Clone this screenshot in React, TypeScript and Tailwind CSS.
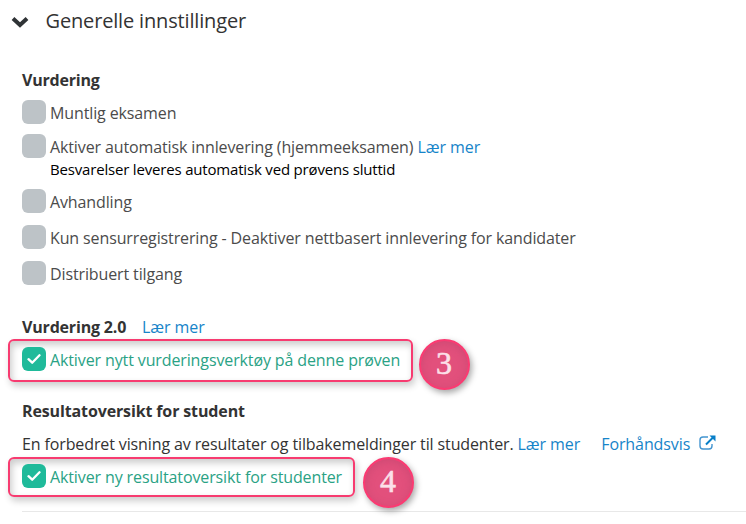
import React from 'react';

type FieldProps = { label: string; checked?: boolean; children?: React.ReactNode };

function Field({ label, checked, children }: FieldProps) {
  return (
    <label className="flex h-6 items-start gap-1 whitespace-nowrap">
      <span
        className={
          checked
            ? 'flex h-6 w-6 items-center justify-center rounded-md bg-[#1fba9a]'
            : 'h-6 w-6 rounded-md bg-[#bdc3c7]'
        }
      >
        {checked && (
          <svg width="14" height="12" viewBox="0 0 14 12" fill="none">
            <path d="M1.5 6.2 5.2 9.7 12.5 2.3" stroke="white" strokeWidth="2.3" strokeLinecap="round" strokeLinejoin="round" />
          </svg>
        )}
      </span>
      <span className={checked ? 'pt-px tracking-[-0.12px] text-[#2aa285]' : 'pt-px tracking-[-0.12px] text-[#4b4b4b]'}>
        {label} {children}
      </span>
    </label>
  );
}

function More() {
  return <a className="tracking-[-0.07px] text-[#1684c9]">Lær mer</a>;
}

function Step({ n }: { n: number }) {
  return (
    <span className="flex h-[51px] w-[51px] shrink-0 items-center justify-center rounded-full border-2 border-[#fb3a72] bg-[#e2507c] pb-[3px] pr-px font-['Liberation_Serif',serif] text-[32px] leading-none text-[#fce0e9] shadow-[2px_3px_6px_rgba(0,0,0,0.35),inset_0_2px_8px_rgba(170,60,100,0.35)] [-webkit-text-stroke:0.6px_#fce0e9]">
      {n}
    </span>
  );
}

const frame =
  'shrink-0 rounded-md border-2 border-[#f73b70] pl-3 shadow-[2px_4px_7px_rgba(0,0,0,0.2),inset_2px_4px_7px_rgba(0,0,0,0.2)]';

export default function App() {
  return (
    <main className="h-[524px] w-[746px] overflow-hidden bg-white font-['Open_Sans',sans-serif] text-base leading-6 text-[#333]">
      <header className="flex h-[68px] items-start pl-[11px] pt-[7px]">
        <svg width="18" height="12" viewBox="0 0 18 12" className="mt-[9px]" fill="none">
          <path d="M2 2.5 9 9 16 2.5" stroke="#2f3336" strokeWidth="4" />
        </svg>
        <h2 className="ml-[16.5px] text-xl leading-7 tracking-[-0.16px]">Generelle innstillinger</h2>
      </header>
      <section className="flex flex-col pl-[22px]">
        <h3 className="h-8 font-bold tracking-[-0.2px]">Vurdering</h3>
        <div className="flex flex-col gap-3">
          <Field label="Muntlig eksamen" />
          <div className="-mt-0.5 h-[43px]">
            <Field label="Aktiver automatisk innlevering (hjemmeeksamen)"><More /></Field>
            <p className="ml-7 text-[15px] leading-[22px] tracking-[-0.18px] text-black">Besvarelser leveres automatisk ved prøvens sluttid</p>
          </div>
          <Field label="Avhandling" />
          <Field label="Kun sensurregistrering - Deaktiver nettbasert innlevering for kandidater" />
          <Field label="Distribuert tilgang" />
        </div>
      </section>
      <section className="pt-[30px]">
        <h3 className="flex h-6 pl-[22px]">
          <span className="w-[120px] font-bold tracking-[-0.18px]">Vurdering 2.0</span>
          <More />
        </h3>
        <div className="flex h-[60px] gap-[6px] pl-2">
          <div className={`${frame} h-[43px] w-[405px] pt-[6px]`}>
            <Field checked label="Aktiver nytt vurderingsverktøy på denne prøven" />
          </div>
          <Step n={3} />
        </div>
      </section>
      <section>
        <h3 className="h-[33px] pl-[22px] font-bold tracking-[-0.13px]">Resultatoversikt for student</h3>
        <p className="flex h-[25px] whitespace-nowrap pl-[22px] tracking-[-0.12px]">
          <span>En forbedret visning av resultater og tilbakemeldinger til studenter. <More /></span>
          <a className="ml-[21px] flex gap-[9px] tracking-[-0.1px] text-[#1684c9]">
            Forhåndsvis
            <svg width="17" height="16" viewBox="0 0 17 16" className="mt-[3px]" fill="none">
              <path d="M9 2H4Q1 2 1 5v6q0 3 3 3h6q3 0 3-3V9" stroke="#4395d0" strokeWidth="1.4" />
              <path d="M7 9.5 14 2.5" stroke="#087fc8" strokeWidth="2" />
              <path d="M10.5.5H16.5V6.5Z" fill="#087fc8" />
            </svg>
          </a>
        </p>
        <div className="flex h-[54px] gap-[8px] pl-2">
          <div className={`${frame} h-10 w-[347px] pt-[5px]`}>
            <Field checked label="Aktiver ny resultatoversikt for studenter" />
          </div>
          <Step n={4} />
        </div>
        <hr className="ml-[22px] border-[#e8e8e8]" />
      </section>
    </main>
  );
}
